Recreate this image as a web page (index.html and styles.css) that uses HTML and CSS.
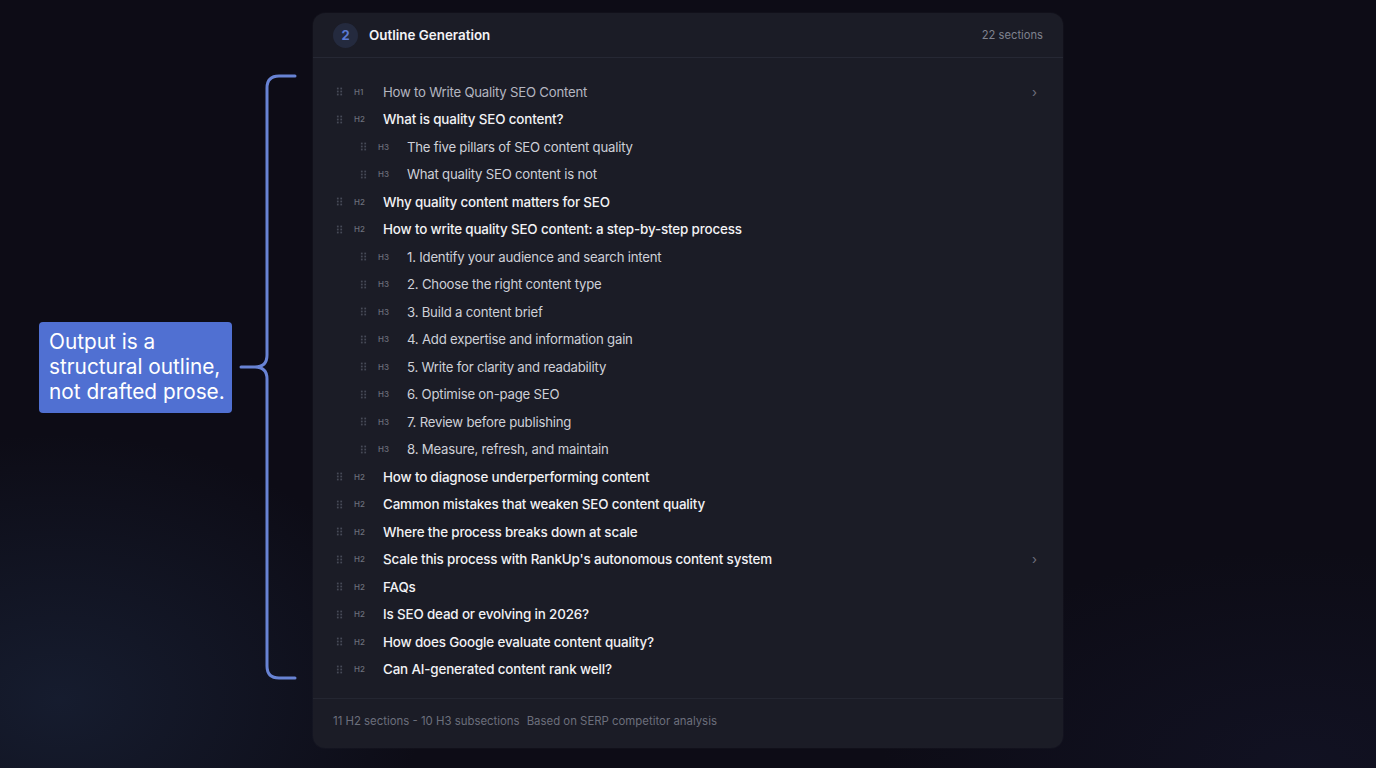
FILE: index.html
```html
<!DOCTYPE html>
<html lang="en">
<head>
<meta charset="utf-8">
<title>Outline Generation</title>
<link rel="stylesheet" href="styles.css">
</head>
<body>
<div class="stage">
  <div class="callout">Output is a structural outline, not drafted prose.</div>
  <svg class="bracket" width="70" height="614" viewBox="0 0 70 614">
    <path d="M56 3 H40 Q28 3 28 15 V282 Q28 294 16 294 H2 H16 Q28 294 28 306 V593 Q28 605 40 605 H56" fill="none" stroke="#6883d4" stroke-width="3" stroke-linecap="round" stroke-linejoin="round"/>
  </svg>

  <section class="panel">
    <header class="panel-head">
      <div class="step">2</div>
      <h1 class="title">Outline Generation</h1>
      <span class="count">22 sections</span>
    </header>

    <ul class="outline">
      <li class="row lvl1"><span class="grip"></span><span class="tag">H1</span><span class="text">How to Write Quality SEO Content</span><span class="chev">›</span></li>
      <li class="row lvl2"><span class="grip"></span><span class="tag">H2</span><span class="text">What is quality SEO content?</span></li>
      <li class="row lvl3"><span class="grip"></span><span class="tag">H3</span><span class="text">The five pillars of SEO content quality</span></li>
      <li class="row lvl3"><span class="grip"></span><span class="tag">H3</span><span class="text">What quality SEO content is not</span></li>
      <li class="row lvl2"><span class="grip"></span><span class="tag">H2</span><span class="text">Why quality content matters for SEO</span></li>
      <li class="row lvl2"><span class="grip"></span><span class="tag">H2</span><span class="text">How to write quality SEO content: a step-by-step process</span></li>
      <li class="row lvl3"><span class="grip"></span><span class="tag">H3</span><span class="text">1. Identify your audience and search intent</span></li>
      <li class="row lvl3"><span class="grip"></span><span class="tag">H3</span><span class="text">2. Choose the right content type</span></li>
      <li class="row lvl3"><span class="grip"></span><span class="tag">H3</span><span class="text">3. Build a content brief</span></li>
      <li class="row lvl3"><span class="grip"></span><span class="tag">H3</span><span class="text">4. Add expertise and information gain</span></li>
      <li class="row lvl3"><span class="grip"></span><span class="tag">H3</span><span class="text">5. Write for clarity and readability</span></li>
      <li class="row lvl3"><span class="grip"></span><span class="tag">H3</span><span class="text">6. Optimise on-page SEO</span></li>
      <li class="row lvl3"><span class="grip"></span><span class="tag">H3</span><span class="text">7. Review before publishing</span></li>
      <li class="row lvl3"><span class="grip"></span><span class="tag">H3</span><span class="text">8. Measure, refresh, and maintain</span></li>
      <li class="row lvl2"><span class="grip"></span><span class="tag">H2</span><span class="text">How to diagnose underperforming content</span></li>
      <li class="row lvl2"><span class="grip"></span><span class="tag">H2</span><span class="text">Cammon mistakes that weaken SEO content quality</span></li>
      <li class="row lvl2"><span class="grip"></span><span class="tag">H2</span><span class="text">Where the process breaks down at scale</span></li>
      <li class="row lvl2"><span class="grip"></span><span class="tag">H2</span><span class="text">Scale this process with RankUp's autonomous content system</span><span class="chev">›</span></li>
      <li class="row lvl2"><span class="grip"></span><span class="tag">H2</span><span class="text">FAQs</span></li>
      <li class="row lvl2"><span class="grip"></span><span class="tag">H2</span><span class="text">Is SEO dead or evolving in 2026?</span></li>
      <li class="row lvl2"><span class="grip"></span><span class="tag">H2</span><span class="text">How does Google evaluate content quality?</span></li>
      <li class="row lvl2"><span class="grip"></span><span class="tag">H2</span><span class="text">Can AI-generated content rank well?</span></li>
    </ul>

    <footer class="panel-foot">
      <span>11 H2 sections - 10 H3 subsections</span>
      <span>Based on SERP competitor analysis</span>
    </footer>
  </section>
</div>
</body>
</html>
```

FILE: styles.css
```css
* { box-sizing: border-box; }
html, body {
  margin: 0;
  padding: 0;
  width: 1376px;
  height: 768px;
  overflow: hidden;
}
body {
  font-family: Inter, "Noto Sans", sans-serif;
  background-color: #0d0c16;
  background-image:
    radial-gradient(ellipse 520px 380px at 60px 700px, rgba(38, 58, 92, 0.35), transparent 70%),
    radial-gradient(ellipse 600px 300px at 1300px 760px, rgba(30, 34, 70, 0.25), transparent 70%);
}
.stage {
  position: relative;
  width: 1376px;
  height: 768px;
  display: flex;
  justify-content: center;
  padding-top: 13px;
}
.callout {
  position: absolute;
  left: 39px;
  top: 322px;
  width: 193px;
  height: 91px;
  background: #5070d2;
  border-radius: 4px;
  color: #ffffff;
  font-size: 20.8px;
  line-height: 25px;
  padding: 7px 2px 0 10px;
}
.bracket {
  position: absolute;
  left: 239px;
  top: 73px;
}
.panel {
  width: 750px;
  height: 735px;
  background: #1b1c26;
  border-radius: 12px;
  display: flex;
  flex-direction: column;
  box-shadow: 0 0 0 1px rgba(255,255,255,0.02);
}
.panel-head {
  height: 45px;
  display: flex;
  align-items: center;
  padding: 0 20px;
  border-bottom: 1px solid #262834;
}
.step {
  width: 25px;
  height: 25px;
  border-radius: 50%;
  background: #242a3e;
  color: #5b7ad4;
  font-size: 13px;
  font-weight: 700;
  display: flex;
  align-items: center;
  justify-content: center;
}
.title {
  margin: 0 0 0 11px;
  font-size: 13.4px;
  font-weight: 600;
  color: #f3f3f6;
  flex: 1;
}
.count {
  font-size: 11.2px;
  color: #7f828e;
}
.outline {
  list-style: none;
  margin: 0;
  padding: 20px 20px 15px 20px;
  border-bottom: 1px solid #242631;
}
.row {
  height: 27.5px;
  display: flex;
  align-items: center;
  position: relative;
}
.row.lvl3 { padding-left: 24px; }
.grip {
  width: 7px;
  height: 9px;
  margin-left: 3px;
  background-image: radial-gradient(circle, #474a57 0.9px, transparent 1.2px);
  background-size: 3.5px 3px;
  flex: none;
}
.tag {
  width: 40px;
  padding-left: 11px;
  font-size: 8px;
  font-weight: 500;
  color: #6c6f7b;
  flex: none;
}
.text {
  font-size: 13.2px;
  letter-spacing: -0.22px;
  color: #ced0d8;
  flex: 1;
}
.lvl1 .text { color: #b4b6c0; }
.lvl2 .text { color: #f2f2f5; font-weight: 500; font-size: 13.4px; letter-spacing: -0.15px; }
.chev {
  color: #6e717c;
  font-size: 13px;
  width: 10px;
  margin-right: 1px;
}
.panel-foot {
  flex: 1;
  display: flex;
  align-items: center;
  gap: 7px;
  padding: 0 20px 6px 20px;
  font-size: 11.4px;
  color: #6c6f7c;
}
```
